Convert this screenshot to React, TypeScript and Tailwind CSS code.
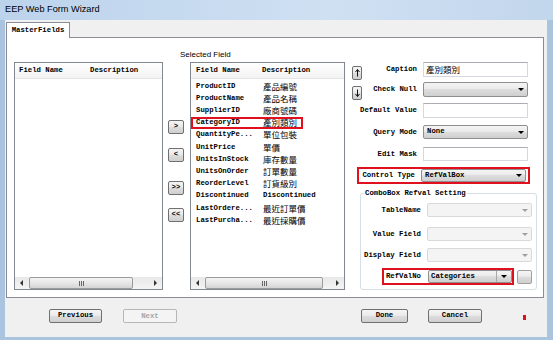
import React from "react";

// Fuentes comunes
const mono = "font-['Liberation_Mono',monospace] text-[7.3px]";
const cjk = "font-['Noto_Sans_CJK_TC',sans-serif] text-[8.5px]";
const sans = "font-['Liberation_Sans',Arial,sans-serif]";

const winBtn =
  "flex items-center justify-center rounded-[2px] border border-[#707070] bg-[linear-gradient(#f4f4f4,#ebebeb_45%,#dddddd_50%,#cfcfcf)] text-black";

const selectedFields: [string, string][] = [
  ["ProductID", "產品編號"],
  ["ProductName", "產品名稱"],
  ["SupplierID", "廠商號碼"],
  ["CategoryID", "產別類別"],
  ["QuantityPe...", "單位包裝"],
  ["UnitPrice", "單價"],
  ["UnitsInStock", "庫存數量"],
  ["UnitsOnOrder", "訂單數量"],
  ["ReorderLevel", "訂貨級別"],
  ["Discontinued", "Discontinued"],
  ["LastOrdere...", "最近訂單價"],
  ["LastPurcha...", "最近採購價"],
];

const isAscii = (s: string) => /^[\x00-\x7f]*$/.test(s);

// Triángulo de desplegable
function DownTri({ gray }: { gray?: boolean }) {
  return (
    <div
      className={`h-0 w-0 border-x-[3px] border-t-[3px] border-x-transparent ${
        gray ? "border-t-[#a0a0a0]" : "border-t-black"
      }`}
    />
  );
}

function Combo({
  text,
  className,
  disabled,
}: {
  text?: string;
  className: string;
  disabled?: boolean;
}) {
  return (
    <div
      className={`flex items-center rounded-[2px] border ${
        disabled
          ? "border-[#d9d9d9] bg-[#f4f4f4]"
          : "border-[#8e8f8f] bg-[linear-gradient(#f4f4f4,#ebebeb_45%,#dddddd_50%,#cfcfcf)]"
      } ${className}`}
    >
      <span className={`flex-1 pl-[3px] font-bold leading-none ${mono}`}>{text}</span>
      <div className="mr-[3px] flex w-[7px] justify-center">
        <DownTri gray={disabled} />
      </div>
    </div>
  );
}

function TextBox({ text, className }: { text?: string; className: string }) {
  return (
    <div
      className={`flex items-center border border-[#d5d8de] border-t-[#abadb3] bg-white ${className}`}
    >
      {text && <span className={`pl-[2px] leading-none ${cjk}`}>{text}</span>}
    </div>
  );
}

function Label({ text, className }: { text: string; className: string }) {
  return (
    <div className={`flex shrink-0 justify-end whitespace-nowrap font-bold ${mono} ${className}`}>
      {text}
    </div>
  );
}

// Barra de desplazamiento horizontal estilo Windows 7
function HScroll({ thumb, after }: { thumb: string; after: string }) {
  return (
    <div className="flex h-[12px] bg-[linear-gradient(#e8e8e8,#f4f4f4)]">
      <div className="flex w-[13px] items-center justify-center">
        <div className="h-0 w-0 border-y-[3px] border-r-[3px] border-y-transparent border-r-[#333]" />
      </div>
      <div
        className={`flex items-center justify-center gap-[1px] rounded-[2px] border border-[#9a9a9a] bg-[linear-gradient(#f4f4f4,#e6e6e6_50%,#d4d4d4)] ${thumb}`}
      >
        <div className="h-[5px] w-[1px] bg-[#666]" />
        <div className="h-[5px] w-[1px] bg-[#666]" />
        <div className="h-[5px] w-[1px] bg-[#666]" />
      </div>
      <div className={after} />
      <div className="flex w-[13px] items-center justify-center">
        <div className="h-0 w-0 border-y-[3px] border-l-[3px] border-y-transparent border-l-[#333]" />
      </div>
    </div>
  );
}

function ListHeader({ pad, col }: { pad: string; col: string }) {
  return (
    <div
      className={`flex h-[16px] shrink-0 items-center border-b border-[#e5e5e5] bg-[linear-gradient(#ffffff,#f3f3f3)] font-bold ${mono} ${pad}`}
    >
      <div className={col}>Field Name</div>
      <div>Description</div>
    </div>
  );
}

function SmallBtn({ label, className }: { label: string; className: string }) {
  return <div className={`${winBtn} ${mono} font-bold leading-none ${className}`}>{label}</div>;
}

// Flecha vertical para subir / bajar
function VArrow({ up }: { up?: boolean }) {
  return (
    <svg width="5" height="8" viewBox="0 0 5 8" className={up ? "" : "rotate-180"}>
      <path d="M2.5 0.5 L0.5 3 M2.5 0.5 L4.5 3 M2.5 0.5 V7.5" stroke="#111" strokeWidth="1" fill="none" />
    </svg>
  );
}

export default function App() {
  return (
    <div className="flex h-[340px] w-[553px] flex-col overflow-hidden bg-[#aac3df]">
      {/* Barra de título */}
      <div className="flex h-[20px] shrink-0 items-center bg-[linear-gradient(90deg,#bcd3ec,#cfe0f2_60%,#c2d6ec)] pl-[5px]">
        <span className={`${sans} text-[9.2px] text-black`}>EEP Web Form Wizard</span>
      </div>

      <div className="mx-[5px] flex h-[317px] w-[542px] flex-col bg-[#f0f0f0]">
        {/* Pestañas */}
        <div className="flex h-[17px] shrink-0 items-end pl-[1px]">
          <div
            className={`relative z-10 -mb-px flex h-[16px] w-[64px] items-center justify-center border border-b-0 border-[#898c95] bg-white font-bold ${mono}`}
          >
            MasterFields
          </div>
        </div>

        {/* Página de pestaña */}
        <div className="ml-[1px] flex h-[261px] w-[538px] shrink-0 border border-[#898c95] bg-white">
          {/* Lista izquierda */}
          <div className="ml-[7px] mt-[24px] flex h-[228px] w-[149px] shrink-0 flex-col border border-[#828790]">
            <ListHeader pad="pl-[4px]" col="w-[71px]" />
            <div className="flex-1" />
            <HScroll thumb="w-[104px] ml-[1px]" after="w-[16px]" />
          </div>

          {/* Botones de mover */}
          <div className="ml-[5px] flex w-[16px] shrink-0 flex-col">
            <SmallBtn label=">" className="mt-[82px] h-[14px]" />
            <SmallBtn label="<" className="mt-[14px] h-[14px]" />
            <SmallBtn label=">>" className="mt-[19px] h-[14px]" />
            <SmallBtn label="<<" className="mt-[13px] h-[14px]" />
          </div>

          {/* Campos seleccionados */}
          <div className="ml-[6px] flex w-[155px] shrink-0 flex-col">
            <div className={`-ml-[10px] mt-[11px] h-[12px] leading-[12px] ${sans} text-[8px]`}>
              Selected Field
            </div>
            <div className="mt-[1px] flex h-[228px] flex-col border border-[#828790]">
              <ListHeader pad="pl-[5px]" col="w-[66px]" />
              <div className="flex-1 pt-[1px]">
                {selectedFields.map(([name, desc]) => (
                  <div key={name} className="relative flex h-[12.2px] items-center pl-[5px]">
                    <div className={`w-[67px] font-bold ${mono}`}>{name}</div>
                    <div className={isAscii(desc) ? `font-bold ${mono}` : cjk}>{desc}</div>
                    {name === "CategoryID" && (
                      <div className="absolute inset-y-0 left-0 w-[112px] border-2 border-[#e0101f]" />
                    )}
                  </div>
                ))}
              </div>
              <HScroll thumb="w-[118px] ml-[1px]" after="w-[8px]" />
            </div>
          </div>

          {/* Propiedades */}
          <div className="ml-[7px] mt-[24px] flex w-[185px] shrink-0 flex-col">
            <div className="flex">
              <div className="flex w-[10px] flex-col">
                <div className={`${winBtn} mt-[4px] h-[14px]`}>
                  <VArrow up />
                </div>
                <div className={`${winBtn} mt-[6px] h-[14px]`}>
                  <VArrow />
                </div>
              </div>
              <div className="flex w-[166px] flex-col">
                <div className="flex h-[15px] items-center">
                  <Label text="Caption" className="w-[55px]" />
                  <TextBox text="產別類別" className="ml-[6px] h-[15px] w-[105px]" />
                </div>
                <div className="mt-[5px] flex h-[15px] items-center">
                  <Label text="Check Null" className="w-[55px]" />
                  <Combo className="ml-[6px] h-[15px] w-[105px]" />
                </div>
                <div className="mt-[6px] flex h-[15px] items-center">
                  <Label text="Default Value" className="w-[55px]" />
                  <TextBox className="ml-[6px] h-[15px] w-[105px]" />
                </div>
                <div className="mt-[7px] flex h-[14px] items-center">
                  <Label text="Query Mode" className="w-[55px]" />
                  <Combo text="None" className="ml-[6px] h-[14px] w-[105px]" />
                </div>
                <div className="mt-[8px] flex h-[14px] items-center">
                  <Label text="Edit Mask" className="w-[55px]" />
                  <TextBox className="ml-[6px] h-[14px] w-[105px]" />
                </div>
              </div>
            </div>

            <div className="ml-[5px] mt-[6px] flex h-[17px] w-[173px] items-center border-2 border-[#e0101f]">
              <Label text="Control Type" className="w-[56px]" />
              <Combo text="RefValBox" className="ml-[6px] h-[13px] w-[105px]" />
            </div>

            <fieldset className="ml-[8px] mt-[4px] h-[102px] w-[177px] rounded-[3px] border border-[#d5dfe5]">
              <legend className={`ml-[3px] px-[1px] leading-[10px] font-bold ${mono}`}>
                ComboBox Refval Setting
              </legend>
              <div className="mt-[5px] flex h-[14px] items-center">
                <Label text="TableName" className="w-[60px]" />
                <Combo disabled className="ml-[6px] h-[14px] w-[105px]" />
              </div>
              <div className="mt-[10px] flex h-[14px] items-center">
                <Label text="Value Field" className="w-[60px]" />
                <Combo disabled className="ml-[6px] h-[14px] w-[105px]" />
              </div>
              <div className="mt-[7px] flex h-[14px] items-center">
                <Label text="Display Field" className="w-[60px]" />
                <Combo disabled className="ml-[6px] h-[14px] w-[105px]" />
              </div>
              <div className="mt-[6px] flex h-[17px] items-center">
                <div className="ml-[21px] flex h-[17px] w-[132px] items-center border-2 border-[#e0101f]">
                  <Label text="RefValNo" className="w-[37px]" />
                  <div className="ml-[7px] flex h-[13px] w-[84px] items-stretch rounded-[2px] border border-[#8e8f8f] bg-[linear-gradient(#f4f4f4,#ebebeb_45%,#dddddd_50%,#cfcfcf)]">
                    <div className={`flex flex-1 items-center pl-[2px] font-bold ${mono}`}>
                      <span className="leading-none">Categories</span>
                    </div>
                    <div className="flex w-[15px] items-center justify-center border-l border-[#a7a7a7]">
                      <DownTri />
                    </div>
                  </div>
                </div>
                <div className={`${winBtn} ml-[3px] h-[14px] w-[15px] border-[#a0a0a0]`} />
              </div>
            </fieldset>
          </div>
        </div>

        {/* Botones inferiores */}
        <div className="flex items-start pt-[11px]">
          <SmallBtn label="Previous" className="ml-[44px] h-[14px] w-[53px]" />
          <div
            className={`ml-[21px] flex h-[14px] w-[54px] items-center justify-center rounded-[2px] border border-[#b5b8bb] bg-[#f4f4f4] font-bold text-[#a6a6a6] ${mono}`}
          >
            Next
          </div>
          <SmallBtn label="Done" className="ml-[184px] h-[14px] w-[47px]" />
          <SmallBtn label="Cancel" className="ml-[20px] h-[14px] w-[54px]" />
          <div className="ml-[41px] mt-[6px] h-[5px] w-[3px] bg-[#e0101f]" />
        </div>
      </div>
    </div>
  );
}
